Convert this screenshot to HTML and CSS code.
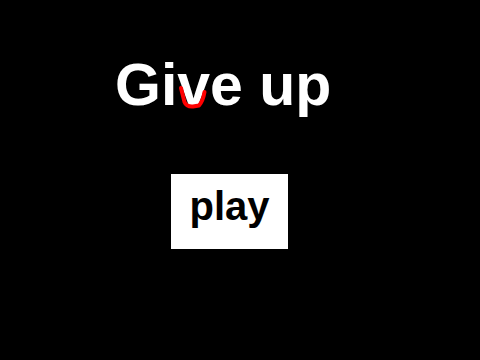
FILE: index.html
```
<!DOCTYPE html>
<html lang="en">
<head>
    <meta charset="UTF-8">
    <meta name="viewport" content="width=device-width, initial-scale=1.0">
    <title>Give up</title>
    <link rel="stylesheet" href="styles.css">
</head>
<body>
    <div class="screen">
        <h1 class="title">Give up</h1>
        <!-- red scribble under the v -->
        <svg class="scribble" width="36" height="32" viewBox="0 0 36 32">
            <path d="M4 9 L7.5 23 Q9.5 28 16 27.5 L22 26.5 Q26 22 27.5 13" fill="none" stroke="#ff0000" stroke-width="4" stroke-linecap="round" stroke-linejoin="round"/>
        </svg>
        <button class="play-btn">play</button>
    </div>
</body>
</html>
```

FILE: styles.css
```
body {
    margin: 0;
    padding: 0;
    background: #000;
    font-family: "Liberation Sans", Arial, sans-serif;
}
.screen {
    position: relative;
    width: 480px;
    height: 360px;
    display: flex;
    flex-direction: column;
    align-items: flex-start;
}
.scribble {
    position: absolute;
    left: 177px;
    top: 79px;
}
.title {
    margin: 52px 0 0 115px;
    font-size: 59px;
    line-height: 66px;
    font-weight: bold;
    color: #fff;
}
.play-btn {
    margin: 56px 0 0 171px;
    width: 117px;
    height: 75px;
    padding: 9px 0 20px;
    border: none;
    border-radius: 0;
    background: #fff;
    color: #000;
    font-family: "Liberation Sans", Arial, sans-serif;
    font-size: 40px;
    line-height: 46px;
    font-weight: bold;
    text-align: center;
    cursor: pointer;
}
```
